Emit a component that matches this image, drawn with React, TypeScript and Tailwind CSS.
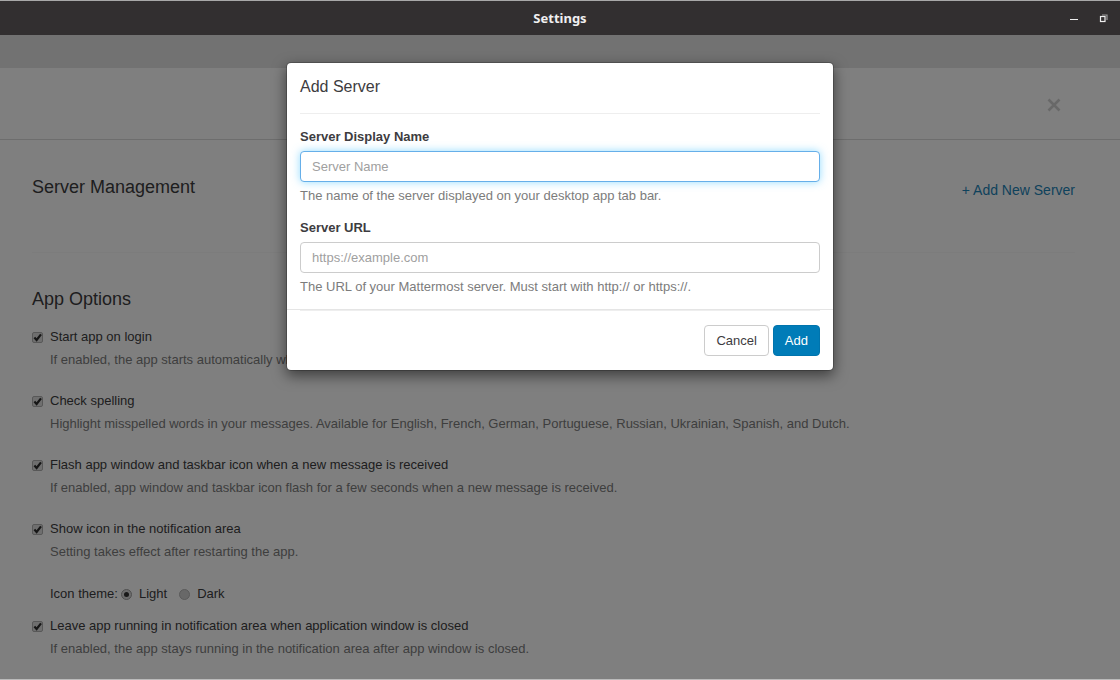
import type { InputHTMLAttributes, ReactNode } from "react";

function CheckOption({ id, label, help }: { id: string; label: string; help: string }) {
  return (
    <div className="flex flex-col">
      <label htmlFor={id} className="flex h-5 items-center gap-[7px]">
        <span className="grid size-[11px] place-items-center">
          <input
            id={id}
            type="checkbox"
            defaultChecked
            className="peer col-start-1 row-start-1 size-[11px] appearance-none rounded-xs border border-[#b0b0b0] bg-[#dedede]"
          />
          <svg
            viewBox="0 0 11 11"
            className="pointer-events-none invisible col-start-1 row-start-1 size-[11px] peer-checked:visible"
            aria-hidden="true"
          >
            <path d="M2.4 5.6 4.6 8 9 2.4" fill="none" stroke="#2c2c2c" strokeWidth="2.2" />
          </svg>
        </span>
        {label}
      </label>
      <p className="mt-[3px] h-5 pl-[18px] text-[#7c7c7c]">{help}</p>
    </div>
  );
}

function ThemeRadio({ id, label, checked }: { id: string; label: string; checked?: boolean }) {
  return (
    <label htmlFor={id} className="flex items-center gap-[7px]">
      <span className="grid size-[11px] place-items-center">
        <input
          id={id}
          type="radio"
          name="theme"
          defaultChecked={checked}
          className="peer col-start-1 row-start-1 size-[11px] appearance-none rounded-full border border-[#b4b4b4] bg-[#d0d0d0] checked:border-[#a0a0a0] checked:bg-[#d8d8d8]"
        />
        <span className="pointer-events-none invisible col-start-1 row-start-1 size-[5px] rounded-full bg-[#333] peer-checked:visible" />
      </span>
      {label}
    </label>
  );
}

function Field({
  id,
  label,
  help,
  ...input
}: { id: string; label: string; help: ReactNode } & InputHTMLAttributes<HTMLInputElement>) {
  return (
    <div className="flex flex-col">
      <label htmlFor={id} className="mb-1 h-5 font-bold">
        {label}
      </label>
      <input
        id={id}
        type="text"
        className="h-[31px] w-full rounded border border-[#ccc] bg-white px-[11px] text-[#555] outline-none placeholder:text-[#a0a0a0] focus:border-[#66afe9] focus:shadow-[0_0_8px_rgba(102,205,255,0.7)]"
        {...input}
      />
      <p className="mt-1 h-5 text-[#7c7c7c]">{help}</p>
    </div>
  );
}

function TitleBar() {
  return (
    <header className="grid h-[35px] grid-cols-[1fr_auto_1fr] items-center border-t border-[#a8a8a8] bg-[#322f30] text-white">
      <h1 className="col-start-2 font-['Noto_Sans',sans-serif] text-[13px] font-bold text-[#f0f0f0]">Settings</h1>
      <div className="flex items-center justify-end gap-5 pr-3">
        <button type="button" aria-label="Minimize">
          <svg viewBox="0 0 10 10" className="size-[10px]">
            <path d="M1 6.5h8" stroke="#eee" strokeWidth="1" />
          </svg>
        </button>
        <button type="button" aria-label="Restore">
          <svg viewBox="0 0 9 9" className="size-[9px]" fill="none">
            <path d="M3 1h5v5" stroke="#999" strokeWidth="1.2" />
            <rect x="1.5" y="2.5" width="4.5" height="5" stroke="#eee" strokeWidth="1.2" />
          </svg>
        </button>
      </div>
    </header>
  );
}

function AddServerDialog() {
  return (
    <div className="absolute inset-0 flex items-start justify-center bg-black/50 pt-[27px]">
      <form
        role="dialog"
        aria-labelledby="dialog-title"
        className="w-full max-w-[548px] rounded-[5px] border border-black/20 bg-white bg-clip-padding text-[#3d3c40] shadow-[0_5px_14px_rgba(0,0,0,0.5)]"
      >
        <div className="flex flex-col px-[13px] pt-3">
          <h2 id="dialog-title" className="h-6 text-base leading-6">
            Add Server
          </h2>
          <hr className="mt-[14px] mb-[13px] border-[#eee]" />
          <div className="flex flex-col gap-3">
            <Field
              id="server-name"
              label="Server Display Name"
              placeholder="Server Name"
              help="The name of the server displayed on your desktop app tab bar."
              autoFocus
            />
            <Field
              id="server-url"
              label="Server URL"
              placeholder="https://example.com"
              help="The URL of your Mattermost server. Must start with http:// or https://."
            />
          </div>
        </div>
        <footer className="mt-3 border-t border-[#e5e5e5] px-[13px] pb-[14px]">
          <hr className="border-[#eee]" />
          <div className="flex justify-end gap-1 pt-[14px]">
            <button type="button" className="h-[31px] rounded border border-[#ccc] bg-white px-[11px]">
              Cancel
            </button>
            <button type="button" className="h-[31px] rounded border border-[#0074ad] bg-[#007cb8] px-[11px] text-white">
              Add
            </button>
          </div>
        </footer>
      </form>
    </div>
  );
}

export default function App() {
  return (
    <div className="flex min-h-screen flex-col border-b border-[#bbb] bg-white font-['Liberation_Sans',Arial,sans-serif] text-[13px] leading-5">
      <TitleBar />
      <div className="relative flex grow flex-col">
        <div className="h-[33px] bg-[#e4e4e4]" />
        <div className="flex h-[72px] items-center justify-end border-b border-[#dadada] pt-[3px] pr-[59px]">
          <button type="button" aria-label="Close settings">
            <svg viewBox="0 0 14 14" className="size-[14px]">
              <path d="M1.5 1.5 12.5 12.5M12.5 1.5 1.5 12.5" stroke="#d0d0d0" strokeWidth="2.6" />
            </svg>
          </button>
        </div>
        <main className="pr-[45px] pb-5 pl-8 text-[#3d3c40]">
          <section className="flex h-[113px] items-start justify-between border-b border-[#f8f8f8] pt-[37px]">
            <h2 className="text-lg leading-5">Server Management</h2>
            <a href="#add-server" className="mt-[3px] text-sm leading-5 text-[#1c84b8]">
              + Add New Server
            </a>
          </section>
          <section className="pt-9">
            <h2 className="text-lg leading-5">App Options</h2>
            <div className="mt-[18px] flex flex-col gap-[21px]">
              <CheckOption
                id="autostart"
                label="Start app on login"
                help="If enabled, the app starts automatically when you log in to your machine."
              />
              <CheckOption
                id="spelling"
                label="Check spelling"
                help="Highlight misspelled words in your messages. Available for English, French, German, Portuguese, Russian, Ukrainian, Spanish, and Dutch."
              />
              <CheckOption
                id="flash"
                label="Flash app window and taskbar icon when a new message is received"
                help="If enabled, app window and taskbar icon flash for a few seconds when a new message is received."
              />
              <CheckOption
                id="tray"
                label="Show icon in the notification area"
                help="Setting takes effect after restarting the app."
              />
            </div>
            <div className="mt-[22px] mb-3 flex h-5 items-center pl-[18px]" role="radiogroup" aria-label="Icon theme">
              <span className="mr-[3px]">Icon theme:</span>
              <div className="flex gap-3">
                <ThemeRadio id="theme-light" label="Light" checked />
                <ThemeRadio id="theme-dark" label="Dark" />
              </div>
            </div>
            <CheckOption
              id="minimize"
              label="Leave app running in notification area when application window is closed"
              help="If enabled, the app stays running in the notification area after app window is closed."
            />
          </section>
        </main>
        <AddServerDialog />
      </div>
    </div>
  );
}
